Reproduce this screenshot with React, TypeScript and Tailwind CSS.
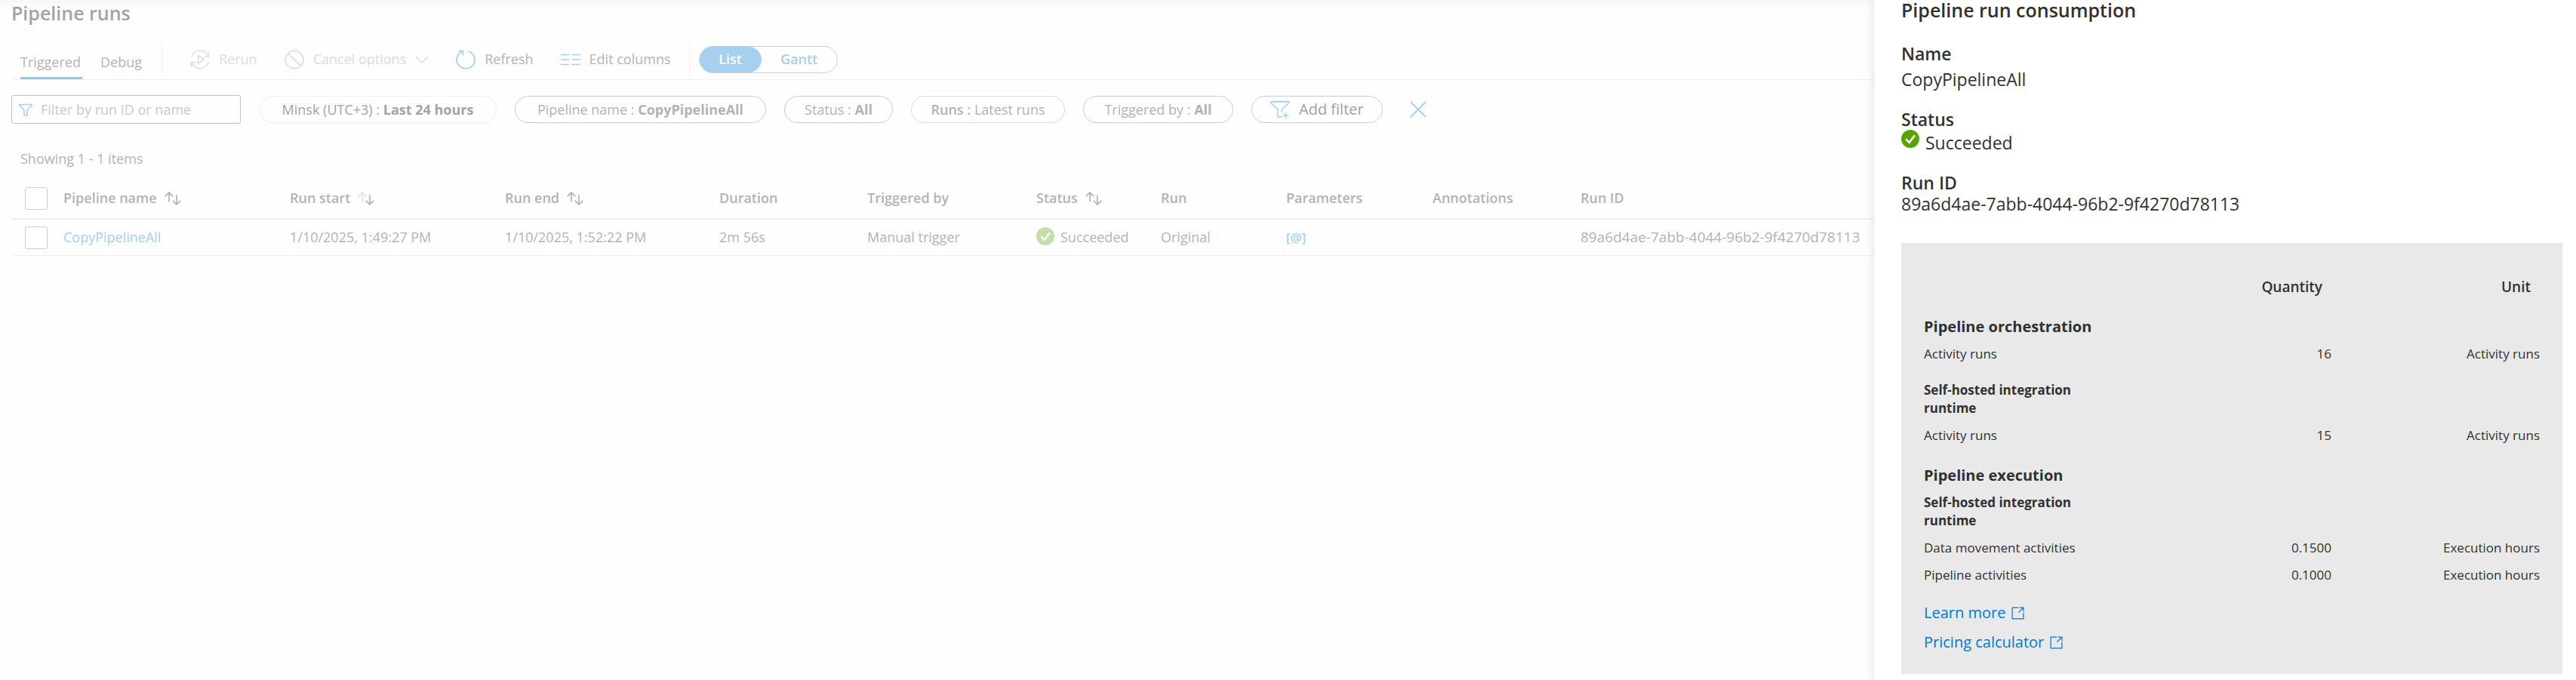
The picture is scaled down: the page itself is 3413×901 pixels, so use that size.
import React from "react";

const CheckBadge = ({ className }: { className: string }) => (
  <svg viewBox="0 0 24 24" className={className} aria-hidden="true">
    <circle cx="12" cy="12" r="12" fill="currentColor" />
    <path d="M6 12.2 10.6 16.8 18 7.4" fill="none" stroke="#fff" strokeWidth="2.6" />
  </svg>
);

const RerunIcon = () => (
  <svg viewBox="0 0 26 26" className="size-[26px]" fill="none" stroke="currentColor" strokeWidth="1.5" aria-hidden="true">
    <path d="M1.800 9.600A11.800 11.800 0 0 1 24 8.600M24.500 3.600v5.600h-5.600" />
    <path d="M24.200 16.400A11.800 11.800 0 0 1 2 17.400M1.500 22.400v-5.600h5.600" />
    <path d="M10.500 8v10l8-5z" />
  </svg>
);

const CancelIcon = () => (
  <svg viewBox="0 0 26 26" className="size-[26px]" fill="none" stroke="currentColor" strokeWidth="1.5" aria-hidden="true">
    <circle cx="13" cy="13" r="11.800" />
    <path d="M4.600 4.600l16.800 16.800" />
  </svg>
);

const ChevronIcon = () => (
  <svg viewBox="0 0 18 10" className="h-[10px] w-[18px]" fill="none" stroke="currentColor" strokeWidth="1.6" aria-hidden="true">
    <path d="M.7 1 9 9l8.300-8" />
  </svg>
);

const RefreshIcon = () => (
  <svg viewBox="0 0 26 26" className="size-[26px] text-[#a3d0f2]" fill="none" stroke="currentColor" strokeWidth="1.7" aria-hidden="true">
    <path d="M17 2.200A12 11.600 0 1 1 8.600 2.400M4 1.600h5.500v6" />
  </svg>
);

const ColumnsIcon = () => (
  <svg viewBox="0 0 26 16" className="h-[16px] w-[26px] text-[#a3d0f2]" fill="none" stroke="currentColor" strokeWidth="1.600" aria-hidden="true">
    <path d="M0 1.500h11M14.500 1.500H26M0 8h11M14.500 8H26M0 14.500h11M14.500 14.500H26" />
  </svg>
);

const FunnelIcon = () => (
  <svg viewBox="0 0 18 17" className="h-[17px] w-[18px] shrink-0 text-[#a3d0f2]" fill="none" stroke="currentColor" strokeWidth="1.500" aria-hidden="true">
    <path d="M1 1.500h16v1.300l-6 6.200V16H7V9L1 2.800z" />
  </svg>
);

const AddFunnelIcon = () => (
  <svg viewBox="0 0 26 24" className="h-[24px] w-[26px] text-[#a3d0f2]" fill="none" stroke="currentColor" strokeWidth="1.500" aria-hidden="true">
    <path d="M1 1.500h23.500v2L15.500 12v4M15.500 22H10V12L1 3.500v-2M1 2h23.500" />
    <path d="M20.500 16v8M16.500 20h8" />
  </svg>
);

const ClearIcon = () => (
  <svg viewBox="0 0 22 22" className="size-[22px]" fill="none" stroke="currentColor" strokeWidth="1.800" aria-hidden="true">
    <path d="M1 1l20 20M21 1L1 21" />
  </svg>
);

const SortIcon = ({ fadeUp = false }: { fadeUp?: boolean }) => (
  <svg viewBox="0 0 22 18" className="h-[18px] w-[22px]" fill="none" stroke="currentColor" strokeWidth="1.700" aria-hidden="true">
    <path d="M.8 6.200 6 1l5.200 5.200M6 1v12.500" opacity={fadeUp ? 0.35 : 1} />
    <path d="M10.800 11.800 16 17l5.200-5.200M16 17V4.500" />
  </svg>
);

const ExternalIcon = () => (
  <svg viewBox="0 0 17 17" className="size-[17px]" fill="none" stroke="currentColor" strokeWidth="1.200" aria-hidden="true">
    <path d="M9 1.100H1.100v14.800h14.800V8M10.500 1.100h5.400v5.400M15.900 1.100 9.500 7.500" />
  </svg>
);

type Column = { label: string; sort?: "both" | "down" };

const columns: Column[] = [
  { label: "Pipeline name", sort: "both" },
  { label: "Run start", sort: "down" },
  { label: "Run end", sort: "both" },
  { label: "Duration" },
  { label: "Triggered by" },
  { label: "Status", sort: "both" },
  { label: "Run" },
  { label: "Parameters" },
  { label: "Annotations" },
  { label: "Run ID" },
];

const RUN_ID = "89a6d4ae-7abb-4044-96b2-9f4270d78113";

const pill = "flex h-[36px] items-center justify-center whitespace-pre rounded-full border px-[24px]";
const cell = "h-[48px] border-b border-[#efefef] p-0";
const box = "block size-[30px] appearance-none rounded-[3px] border border-[#cdcdcd] bg-white";

function Toolbar() {
  return (
    <div className="mt-[18px] flex h-[54px] items-center whitespace-nowrap border-b border-[#efefef] pl-[12px]">
      <div className="flex gap-[24px] self-stretch" role="tablist">
        <button role="tab" aria-selected="true" className="flex min-w-[82px] items-end border-b-[3px] border-[#a3c4dd] pb-[8px] leading-[24px]">
          Triggered
        </button>
        <button role="tab" aria-selected="false" className="flex min-w-[58px] items-end border-b-[3px] border-transparent pb-[8px] leading-[24px]">
          Debug
        </button>
      </div>
      <div className="ml-[24px] h-[42px] w-px bg-[#efefef]" />
      <button disabled className="ml-[36px] flex items-center gap-[12px] text-[#dcdcdc]">
        <RerunIcon />
        Rerun
      </button>
      <button disabled className="ml-[36px] flex items-center gap-[12px] text-[#dcdcdc]">
        <CancelIcon />
        Cancel options
        <ChevronIcon />
      </button>
      <button className="ml-[36px] flex items-center gap-[12px]">
        <RefreshIcon />
        Refresh
      </button>
      <button className="ml-[36px] flex items-center gap-[12px]">
        <ColumnsIcon />
        Edit columns
      </button>
      <div className="ml-[24px] h-[42px] w-px bg-[#efefef]" />
      <div className="ml-[12px] flex h-[36px] w-[184px] rounded-full border border-[#cfcfcf] font-semibold">
        <button aria-pressed="true" className="w-[82px] rounded-full bg-[#a6d0f0] text-white">
          List
        </button>
        <button aria-pressed="false" className="flex-1 text-[#a3d0f2]">
          Gantt
        </button>
      </div>
    </div>
  );
}

function Filters() {
  return (
    <div className="mt-[20px] flex h-[38px] items-center gap-[24px]">
      <label className="flex h-[38px] w-[304px] items-center gap-[11px] rounded-[3px] border border-[#c4c4c4] pl-[9px]">
        <FunnelIcon />
        <input
          aria-label="Filter by run ID or name"
          placeholder="Filter by run ID or name"
          className="w-full bg-transparent outline-none placeholder:text-[#cacaca]"
        />
      </label>
      <button className={`${pill} min-w-[315px] border-[#efefef] text-[#a3a3a3]`}>
        Minsk (UTC+3) : <b>Last 24 hours</b>
      </button>
      <button className={`${pill} min-w-[333px] border-[#cbcbcb]`}>
        Pipeline name : <b>CopyPipelineAll</b>
      </button>
      <button className={`${pill} min-w-[144px] border-[#cbcbcb]`}>
        Status : <b>All</b>
      </button>
      <button className={`${pill} min-w-[204px] border-[#dadada]`}>
        <span className="font-semibold">Runs : </span>Latest runs
      </button>
      <button className={`${pill} min-w-[199px] border-[#cbcbcb]`}>
        Triggered by : <b>All</b>
      </button>
      <button className={`${pill} min-w-[173px] gap-[12px] border-[#cbcbcb] text-[20px] text-[#a3a3a3]`}>
        <AddFunnelIcon />
        Add filter
      </button>
      <button aria-label="Clear filters" className="pl-[12px] text-[#a3d0f2]">
        <ClearIcon />
      </button>
    </div>
  );
}

function RunsTable() {
  return (
    <table className="mt-[14px] w-full table-fixed border-separate border-spacing-0 whitespace-nowrap text-left">
      <colgroup>
        <col className="w-[69px]" />
        <col className="w-[300px]" />
        <col className="w-[285px]" />
        <col className="w-[284px]" />
        <col className="w-[196px]" />
        <col className="w-[224px]" />
        <col className="w-[165px]" />
        <col className="w-[166px]" />
        <col className="w-[194px]" />
        <col className="w-[196px]" />
        <col />
      </colgroup>
      <thead>
        <tr>
          <th className="h-[55px] border-b-2 border-[#f1f1f1] p-0 pl-[18px]">
            <input type="checkbox" aria-label="Select all runs" className={box} />
          </th>
          {columns.map(({ label, sort }) => (
            <th key={label} className="h-[55px] border-b-2 border-[#f1f1f1] p-0 font-semibold">
              {sort ? (
                <button className="flex items-center gap-[10px]">
                  {label}
                  <SortIcon fadeUp={sort === "down"} />
                </button>
              ) : (
                label
              )}
            </th>
          ))}
        </tr>
      </thead>
      <tbody>
        <tr>
          <td className={`${cell} pl-[18px]`}>
            <input type="checkbox" aria-label="Select CopyPipelineAll" className={box} />
          </td>
          <td className={cell}>
            <a href="#run" className="text-[#a3d0f2]">CopyPipelineAll</a>
          </td>
          <td className={cell}>1/10/2025, 1:49:27 PM</td>
          <td className={cell}>1/10/2025, 1:52:22 PM</td>
          <td className={cell}>2m 56s</td>
          <td className={cell}>Manual trigger</td>
          <td className={cell}>
            <span className="flex items-start gap-[8px]">
              <CheckBadge className="size-[24px] text-[#c4dfa6]" />
              Succeeded
            </span>
          </td>
          <td className={cell}>Original</td>
          <td className={cell}>
            <button aria-label="View parameters" className="block text-[17px] font-semibold text-[#a3d0f2]">[@]</button>
          </td>
          <td className={cell} />
          <td className={`${cell} text-[19px]`}>{RUN_ID}</td>
        </tr>
      </tbody>
    </table>
  );
}

type Line =
  | { kind: "section"; label: string }
  | { kind: "group"; label: string; spaced?: boolean }
  | { kind: "item"; label: string; quantity: string; unit: string };

const lines: Line[] = [
  { kind: "section", label: "Pipeline orchestration" },
  { kind: "item", label: "Activity runs", quantity: "16", unit: "Activity runs" },
  { kind: "group", label: "Self-hosted integration runtime", spaced: true },
  { kind: "item", label: "Activity runs", quantity: "15", unit: "Activity runs" },
  { kind: "section", label: "Pipeline execution" },
  { kind: "group", label: "Self-hosted integration runtime" },
  { kind: "item", label: "Data movement activities", quantity: "0.1500", unit: "Execution hours" },
  { kind: "item", label: "Pipeline activities", quantity: "0.1000", unit: "Execution hours" },
];

function ConsumptionTable() {
  return (
    <table className="w-full table-fixed border-separate border-spacing-0 text-[17px] leading-[24px]">
      <colgroup>
        <col className="w-[240px]" />
        <col className="w-[300px]" />
        <col />
      </colgroup>
      <thead>
        <tr className="text-right text-[19px]">
          <td />
          <th className="p-0 py-[6px] pr-[12px] font-semibold">Quantity</th>
          <th className="p-0 py-[6px] pr-[12px] font-semibold">Unit</th>
        </tr>
      </thead>
      <tbody>
        {lines.map((line, i) => {
          if (line.kind === "section")
            return (
              <tr key={i}>
                <th colSpan={3} className="p-0 pb-[6px] pt-[23px] text-left text-[20px] font-bold">
                  {line.label}
                </th>
              </tr>
            );
          if (line.kind === "group")
            return (
              <tr key={i}>
                <th className={line.spaced ? "p-0 pb-[6px] pt-[18px] text-left font-bold" : "p-0 py-[6px] text-left font-bold"}>
                  {line.label}
                </th>
                <td colSpan={2} />
              </tr>
            );
          return (
            <tr key={i}>
              <td className="whitespace-nowrap p-0 py-[6px]">{line.label}</td>
              <td className="p-0 py-[6px] text-right">{line.quantity}</td>
              <td className="p-0 py-[6px] text-right">{line.unit}</td>
            </tr>
          );
        })}
      </tbody>
    </table>
  );
}

function ConsumptionPanel() {
  return (
    <aside className="relative w-[930px] shrink-0 bg-white pl-[36px] pr-[18px] text-[23px] leading-[28px] text-[#323130] shadow-[0_0_12px_rgba(0,0,0,0.14)]">
      <h2 className="text-[25px] font-semibold leading-[26px]">Pipeline run consumption</h2>
      <dl>
        <dt className="mt-[31px] font-semibold">Name</dt>
        <dd className="mt-[6px]">CopyPipelineAll</dd>
        <dt className="mt-[25px] font-semibold">Status</dt>
        <dd className="mt-[3px] flex items-start gap-[8px]">
          <CheckBadge className="-mt-[3px] size-[24px] text-[#57a300]" />
          Succeeded
        </dd>
        <dt className="mt-[25px] font-semibold">Run ID</dt>
        <dd>{RUN_ID}</dd>
      </dl>
      <section className="mt-[38px] bg-[#e9e9e9] px-[30px] pb-[30px] pt-[40px]">
        <ConsumptionTable />
        <div className="mt-[20px] flex flex-col items-start gap-[15px] text-[20px] leading-[24px] text-[#0078d4]">
          <a href="#learn" className="flex items-center gap-[8px]">
            Learn more
            <ExternalIcon />
          </a>
          <a href="#pricing" className="flex items-center gap-[8px]">
            Pricing calculator
            <ExternalIcon />
          </a>
        </div>
      </section>
    </aside>
  );
}

export default function App() {
  return (
    <div className="flex min-h-screen bg-white font-['Open_Sans','Noto_Sans',sans-serif]">
      <main className="min-w-0 flex-1 bg-linear-to-b from-[#f7f7f7] to-[#fefefe] to-[14px] pl-[15px] text-[18px] text-[#b3b3b3]">
        <h1 className="text-[25px] font-semibold leading-[34px] text-[#a3a3a3]">Pipeline runs</h1>
        <Toolbar />
        <Filters />
        <p className="mt-[34px] pl-[12px] leading-[24px]">Showing 1 - 1 items</p>
        <RunsTable />
      </main>
      <ConsumptionPanel />
    </div>
  );
}
